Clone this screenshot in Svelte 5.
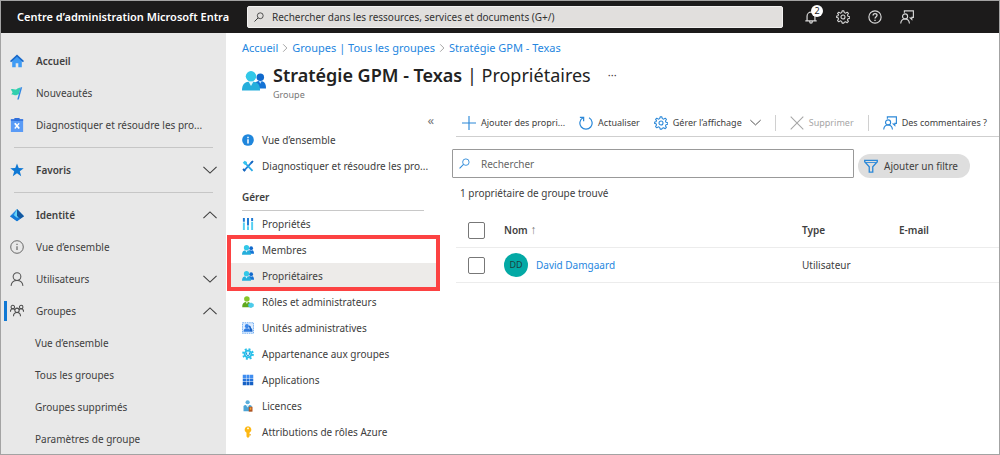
<script>
	const topLinks = [
		{ icon: 'home', label: 'Accueil', strong: true },
		{ icon: 'flag', label: 'Nouveautés' },
		{ icon: 'clipboard', label: 'Diagnostiquer et résoudre les pro...' }
	];

	const identityLinks = [
		{ icon: 'info', label: 'Vue d’ensemble' },
		{ icon: 'user', label: 'Utilisateurs', chevron: 'down' },
		{ icon: 'team', label: 'Groupes', chevron: 'up', current: true },
		{ label: 'Vue d’ensemble' },
		{ label: 'Tous les groupes' },
		{ label: 'Groupes supprimés' },
		{ label: 'Paramètres de groupe' }
	];

	const framedLinks = [
		{ icon: 'people', label: 'Membres' },
		{ icon: 'people', label: 'Propriétaires', active: true }
	];

	const manageLinks = [
		{ icon: 'roles', label: 'Rôles et administrateurs' },
		{ icon: 'units', label: 'Unités administratives' },
		{ icon: 'cog', label: 'Appartenance aux groupes' },
		{ icon: 'apps', label: 'Applications' },
		{ icon: 'licence', label: 'Licences' },
		{ icon: 'key', label: 'Attributions de rôles Azure' }
	];

	const owners = [{ initials: 'DD', name: 'David Damgaard', type: 'Utilisateur', mail: '' }];
</script>

{#snippet icon(name, size = 14)}
	<svg class="icon" width={size} height={size} viewBox="0 0 16 16" fill="none" aria-hidden="true">
		{#if name === 'home'}
			<path d="M2.5 7.5 8 2.5l5.5 5V15h-4v-4.500h-3V15h-4z" fill="#3f9bf4" />
			<path d="M8 .6 16 8l-1.200 1.300L8 3.200 1.200 9.300 0 8z" fill="#1667c9" />
		{:else if name === 'flag'}
			<path d="M1 4c2.500-1.600 4 .8 6.500-.4 1.500-.7 2.500-1.600 4.500-1.500l-2 7.200c-2 .3-2.500 1.500-4.500 1.200-1.600-.3-2.400-1.200-4-.7L3 7z" fill="#30cfae" />
			<path d="M12.200 1.500h1.700L10 15.500H8.300z" fill="#2f86e4" />
		{:else if name === 'clipboard'}
			<path d="M1 1.500h14V16H1z" fill="#5a9bf6" />
			<path d="M1 1.500h14V3H1zM5 0h6v3.500H5z" fill="#2f6fda" />
			<path d="m5.500 6 5 6" stroke="#fff" stroke-width="2.200" />
			<path d="m10.500 6-5 6" stroke="#fff" stroke-width="1.400" />
		{:else if name === 'star'}
			<path d="m8 .5 2 5.300 5.700.2-4.500 3.500 1.600 5.500L8 11.800 3.200 15l1.600-5.500L.3 6 6 5.800z" fill="#0f78d4" />
		{:else if name === 'entra'}
			<path d="m8 1 8 8.500-8 5.500-8-5.500z" fill="#2c8be0" />
			<path d="m8 1 4 8-4 2-4-2z" fill="#62d3fb" />
			<path d="m8 1 8 8.500-4.200 2.800L8 9z" fill="#14589f" />
			<path d="m0 9.500 4-1.800 4 3.800 4 .5-4 3z" fill="#1479d6" />
		{:else if name === 'info'}
			<circle cx="8" cy="8" r="7.200" stroke="#555" />
			<path d="M8 7v4.500M8 4.300v1.300" stroke="#555" stroke-width="1.200" />
		{:else if name === 'user'}
			<circle cx="8" cy="5.200" r="4.400" stroke="#555" stroke-width="1.200" />
			<path d="M1.200 15.800c.4-4 2.700-6 6.800-6s6.400 2 6.800 6" stroke="#555" stroke-width="1.200" />
		{:else if name === 'team'}
			<g stroke="#4a4a4a" stroke-width="1.200">
				<circle cx="3.200" cy="3.500" r="2" />
				<circle cx="12.800" cy="3.500" r="2" />
				<circle cx="8" cy="7.200" r="2.500" />
				<path d="M.5 8.800c0-2 1-3.300 2.700-3.300 1.300 0 2 .5 2.500 1.200M15.500 8.800c0-2-1-3.300-2.700-3.300-1.300 0-2 .5-2.500 1.200M4 14c0-2.800 1.600-4.300 4-4.300s4 1.500 4 4.300" />
			</g>
		{:else if name === 'down'}
			<path d="m.5 4.500 7.500 7 7.500-7" stroke="currentColor" stroke-width="1.300" />
		{:else if name === 'up'}
			<path d="m.5 11.500 7.500-7 7.500 7" stroke="currentColor" stroke-width="1.300" />
		{:else if name === 'right'}
			<path d="m5 2 6 6-6 6" stroke="#999" stroke-width="1.400" />
		{:else if name === 'infoFill'}
			<circle cx="8" cy="8" r="7.800" fill="#1f86dc" />
			<path d="M8 7v5.500M8 3.500v2" stroke="#fff" stroke-width="2" />
		{:else if name === 'tools'}
			<path d="m2.500 14.500 11-12" stroke="#1f7ed8" stroke-width="2.200" />
			<path d="m4 4 10 10.500" stroke="#27a9e6" stroke-width="2.400" />
			<path d="M1 3.500 3.500 1 6.500 2.500 6.800 6 4 6.800z" fill="#35c2ef" />
			<path d="m11 3 3-2.500 1.500 1.500L13 5zM.5 12.500l2-1.500 2.500 3L3 15.500z" fill="#1766bd" />
		{:else if name === 'sliders'}
			<path d="M2.500 0v5M8 0v10M13.500 0v4" stroke="#1c78d4" stroke-width="2.600" />
			<path d="M2.500 6v10M8 11v5M13.500 5v11" stroke="#55cff2" stroke-width="2.600" />
		{:else if name === 'people'}
			<circle cx="12.200" cy="5.500" r="2.500" fill="#1069cc" />
			<path d="M8 13V11c0-2 1.500-3 4.200-3 2.500 0 3.800 1.300 3.800 5z" fill="#1473d5" />
			<path d="m11.200 8 1 1.800 1-1.800z" fill="#b9dcfb" />
			<circle cx="6" cy="4.900" r="3.500" fill="#32c8e8" />
			<path d="M0 14.300C0 10.400 1.600 8.400 6 8.400s6 2 6 5.900z" fill="#25aedb" />
			<path d="m4.300 8.300 1.700 3 1.700-3z" fill="#d9f7fd" />
		{:else if name === 'roles'}
			<circle cx="6.500" cy="4" r="3.700" fill="#86c52a" />
			<path d="M.3 15C.3 10 2 8 6.500 8s6 2.500 6 7z" fill="#5fa81e" />
			<path d="m4.800 7.800 1.700 3 1.700-3z" fill="#e7f6d1" />
			<path d="m12 8.500 3.700 2v3.500L12 16l-3.600-2v-3.500z" fill="#4dcbea" />
		{:else if name === 'units'}
			<path d="M.6 1h14.800v14H.6z" fill="#dcecff" stroke="#4a97ee" stroke-dasharray="2 1" />
			<circle cx="6.500" cy="5.500" r="2.700" fill="#3a87ea" />
			<path d="M2 13c0-3.200 1.300-4.800 4.500-4.800S11 9.800 11 13z" fill="#2f7ce0" />
			<path d="M9 4.500c3 0 3 2 3 3.500 1.500.5 2 2 2 5h-3z" fill="#1b63c4" />
		{:else if name === 'cog'}
			<circle cx="8" cy="8" r="6.500" stroke="#29bfe9" stroke-width="2.600" stroke-dasharray="2.600 2.500" />
			<circle cx="8" cy="8" r="4.500" fill="#d5f6fd" stroke="#29bfe9" stroke-width="2.400" />
			<path d="M6 6v2.500c0 2 4 2 4 0V6" stroke="#1e91d8" stroke-width="1.300" />
		{:else if name === 'apps'}
			<path d="M1 1h4.300v4.300H1zM5.900 1h4.200v4.300H5.900zM10.700 1H15v4.300h-4.300z" fill="#3f8df0" />
			<path d="M1 5.900h4.300v4.200H1zM5.900 5.900h4.200v4.200H5.900zM10.700 5.900H15v4.200h-4.300z" fill="#2273dc" />
			<path d="M1 10.700h4.300V15H1zM5.900 10.700h4.200V15H5.900zM10.700 10.700H15V15h-4.300z" fill="#1560c4" />
		{:else if name === 'licence'}
			<circle cx="7.500" cy="3" r="2.800" fill="#5aaedc" />
			<path d="M2 15V8.500C2 7 4 6.500 7.500 6.500S13 7 13 8.500V15z" fill="#4ba4d6" />
			<path d="m5 6.500 2.500 3.500L10 6.500z" fill="#d8f0fb" />
			<path d="M9 9h5v6.500H9z" fill="#b3541e" />
			<path d="M10.500 10h2v3h-2z" fill="#f0a23a" />
		{:else if name === 'key'}
			<path d="M8 .3a4.600 4.600 0 0 1 2 8.700v5L8 16l-2-2v-5A4.600 4.600 0 0 1 8 .3z" fill="#fdb813" />
			<circle cx="8" cy="3.200" r="1.200" fill="#fff" />
			<path d="M10 10.500h1.500v2H10z" fill="#e79c08" />
		{:else if name === 'plus'}
			<path d="M8 0v16M0 8h16" stroke="#2b88d8" stroke-width="1.300" />
		{:else if name === 'refresh'}
			<path d="M4.500 2A7 7 0 1 0 11.500 2" stroke="#2b88d8" stroke-width="1.400" />
			<path d="M1 1.500h4.300V6" stroke="#2b88d8" stroke-width="1.400" />
		{:else if name === 'gear'}
			<path
				d="M7 1h2l.5 2 1.500.6 1.800-1.100 1.400 1.400-1.100 1.800.6 1.400 2 .5v1.800l-2 .5-.6 1.400 1.100 1.800-1.400 1.400-1.800-1.100-1.500.6L9 15H7l-.5-2-1.500-.6-1.800 1.100-1.400-1.400 1.100-1.800-.6-1.400-2-.5V7.100l2-.5.6-1.400L1.800 3.900l1.400-1.400L5 3.600 6.500 3z"
				stroke="currentColor"
				stroke-width="1.200"
				stroke-linejoin="round"
			/>
			<circle cx="8" cy="8" r="2.300" stroke="currentColor" stroke-width="1.200" />
		{:else if name === 'cross'}
			<path d="m.8.800 14.400 14.400M15.200.8.800 15.200" stroke="#a6a6a6" stroke-width="1.200" />
		{:else if name === 'feedback'}
			<g stroke="currentColor" stroke-width="1.300">
				<path d="M5 3.200V1h10.300v7.500h-1.800v2.300L11 8.500" />
				<circle cx="5.800" cy="7.300" r="2.900" />
				<path d="M.8 15.500c.3-3.300 2-5.200 5-5.200s4.700 1.900 5 5.200" />
			</g>
		{:else if name === 'funnel'}
			<path d="M.8 1.500h14.400v1.700L10 9v6H6V9L.8 3.200z" stroke="#2b88d8" stroke-width="1.500" />
			<path d="M1 4h14" stroke="#2b88d8" />
		{:else if name === 'search'}
			<circle cx="10" cy="6" r="4.700" stroke="currentColor" stroke-width="1.300" />
			<path d="M6.600 9.400.8 15.200" stroke="currentColor" stroke-width="1.500" />
		{:else if name === 'bell'}
			<path d="M1.500 12.500h13M3.500 12.500V7a4.500 4.500 0 0 1 9 0v5.500M6.500 13c0 2.500 3 2.500 3 0" stroke="currentColor" stroke-width="1.400" />
		{:else if name === 'help'}
			<circle cx="8" cy="8" r="7" stroke="currentColor" stroke-width="1.300" />
			<path d="M5.800 6.300c0-3 4.500-2.800 4.500-.2C10.300 7.700 8 7.800 8 9.800M8 11v1.500" stroke="currentColor" stroke-width="1.500" />
		{/if}
	</svg>
{/snippet}

{#snippet menuItem(item)}
	<li>
		<a class="menu-item" class:active={item.active} href="#menu">
			{@render icon(item.icon, 12)}
			{item.label}
		</a>
	</li>
{/snippet}

<div class="portal">
	<header>
		<strong class="brand">Centre d’administration Microsoft Entra</strong>
		<label class="global-search">
			{@render icon('search', 10)}
			<input
				type="text"
				aria-label="Recherche globale"
				placeholder="Rechercher dans les ressources, services et documents (G+/)"
			/>
		</label>
		<div class="actions">
			<button aria-label="Notifications">{@render icon('bell')}<span class="badge">2</span></button>
			<button aria-label="Paramètres">{@render icon('gear')}</button>
			<button aria-label="Aide">{@render icon('help')}</button>
			<button aria-label="Commentaires">{@render icon('feedback')}</button>
		</div>
	</header>

	<div class="body">
		<nav class="sidebar" aria-label="Navigation">
			{#each topLinks as link}
				<a class="side-item" class:strong={link.strong} href="#nav">
					{@render icon(link.icon)}<span>{link.label}</span>
				</a>
			{/each}
			<hr />
			<button class="side-item strong">
				{@render icon('star')}<span>Favoris</span>{@render icon('down')}
			</button>
			<hr />
			<button class="side-item strong">
				{@render icon('entra')}<span>Identité</span>{@render icon('up')}
			</button>
			{#each identityLinks as link}
				<a class="side-item" class:current={link.current} href="#nav">
					{#if link.icon}{@render icon(link.icon)}{/if}
					<span>{link.label}</span>
					{#if link.chevron}{@render icon(link.chevron)}{/if}
				</a>
			{/each}
		</nav>

		<main>
			<nav class="breadcrumb" aria-label="Fil d’Ariane">
				<a href="#home">Accueil</a>
				{@render icon('right', 10)}
				<a href="#groups">Groupes | Tous les groupes</a>
				{@render icon('right', 10)}
				<a href="#group">Stratégie GPM - Texas</a>
			</nav>

			<div class="heading">
				{@render icon('people', 24)}
				<div>
					<h1>Stratégie GPM - Texas <span>| Propriétaires</span></h1>
					<p>Groupe</p>
				</div>
				<button class="more" aria-label="Plus">···</button>
			</div>

			<div class="blade">
				<nav class="menu" aria-label="Menu du groupe">
					<button class="collapse" aria-label="Réduire">«</button>
					<ul>
						{@render menuItem({ icon: 'infoFill', label: 'Vue d’ensemble' })}
						{@render menuItem({ icon: 'tools', label: 'Diagnostiquer et résoudre les pro...' })}
					</ul>
					<h2>Gérer</h2>
					<ul>
						{@render menuItem({ icon: 'sliders', label: 'Propriétés' })}
					</ul>
					<ul class="framed">
						{#each framedLinks as item}
							{@render menuItem(item)}
						{/each}
					</ul>
					<ul>
						{#each manageLinks as item}
							{@render menuItem(item)}
						{/each}
					</ul>
				</nav>

				<section class="content">
					<div class="toolbar">
						<button>{@render icon('plus')}Ajouter des propri...</button>
						<button>{@render icon('refresh')}Actualiser</button>
						<button class="blue">{@render icon('gear')}<span>Gérer l’affichage</span></button>
						<button class="caret" aria-label="Options d’affichage">{@render icon('down', 11)}</button>
						<i></i>
						<button disabled>{@render icon('cross')}Supprimer</button>
						<i></i>
						<button class="blue">{@render icon('feedback')}<span>Des commentaires ?</span></button>
					</div>

					<div class="filters">
						<label class="search">
							{@render icon('search', 11)}
							<input type="text" aria-label="Rechercher" placeholder="Rechercher" />
						</label>
						<button class="pill">{@render icon('funnel')}Ajouter un filtre</button>
					</div>

					<p class="count">1 propriétaire de groupe trouvé</p>

					<table>
						<thead>
							<tr>
								<th class="check"><input type="checkbox" aria-label="Tout sélectionner" /></th>
								<th>Nom <span class="sort">↑</span></th>
								<th class="type">Type</th>
								<th class="mail">E-mail</th>
							</tr>
						</thead>
						<tbody>
							{#each owners as owner}
								<tr>
									<td class="check"><input type="checkbox" aria-label={owner.name} /></td>
									<td>
										<a class="owner" href="#owner">
											<span class="avatar">{owner.initials}</span>{owner.name}
										</a>
									</td>
									<td>{owner.type}</td>
									<td>{owner.mail}</td>
								</tr>
							{/each}
						</tbody>
					</table>
				</section>
			</div>
		</main>
	</div>
</div>

<style>
	:global(body) {
		margin: 0;
	}

	.portal {
		--blue: #2586e0;
		--text: #404040;
		display: flex;
		flex-direction: column;
		box-sizing: border-box;
		min-height: 100vh;
		border: 1px solid #a3a3a3;
		background: #fff;
		color: var(--text);
		font-family: 'Noto Sans', 'Open Sans', sans-serif;
		font-size: 10px;
		line-height: 16px;
	}

	button,
	input {
		margin: 0;
		padding: 0;
		border: 0;
		background: none;
		color: inherit;
		font: inherit;
	}

	a {
		color: inherit;
		text-decoration: none;
	}

	ul {
		margin: 0;
		padding: 0;
		list-style: none;
	}

	.icon {
		flex: none;
	}

	header {
		display: flex;
		align-items: center;
		height: 32px;
		padding-left: 16px;
		background: #1c1b1b;
		color: #fff;
	}

	.brand {
		flex: none;
		width: 230px;
		font-size: 11px;
		font-weight: 600;
		white-space: nowrap;
	}

	.global-search {
		display: flex;
		flex: 0 1 536px;
		align-items: center;
		gap: 8px;
		box-sizing: border-box;
		height: 22px;
		padding: 0 6px;
		border: 1px solid #f2f1f0;
		border-radius: 2px;
		background: #e1dfdd;
		color: #333;
	}

	.global-search input,
	.search input {
		flex: 1;
		min-width: 0;
		outline: none;
	}

	input::placeholder {
		color: inherit;
		opacity: 1;
	}

	.actions {
		display: flex;
		gap: 18px;
		margin-left: 21px;
		color: #d8d8d8;
	}

	.actions button {
		display: flex;
		position: relative;
	}

	.badge {
		position: absolute;
		top: -5px;
		right: -5px;
		width: 12px;
		height: 12px;
		border-radius: 50%;
		background: #fff;
		color: #222;
		font-size: 9px;
		line-height: 12px;
	}

	.body {
		display: grid;
		flex: 1;
		grid-template-columns: 225px 1fr;
	}

	.sidebar {
		display: flex;
		flex-direction: column;
		gap: 12px;
		padding-top: 18px;
		background: #e8e8e8;
	}

	.sidebar hr {
		flex: none;
		height: 1px;
		margin: 0 13px;
		border: 0;
		background: #c6c6c6;
	}

	.side-item {
		display: flex;
		align-items: center;
		gap: 12px;
		height: 20px;
		padding: 0 9px;
		text-align: left;
	}

	.side-item span {
		flex: 1;
		white-space: nowrap;
	}

	.side-item span:first-child {
		margin-left: 25px;
	}

	.strong {
		font-weight: 600;
	}

	.current {
		background: linear-gradient(#0f78d4, #0f78d4) 3px center / 3px 20px no-repeat;
	}

	main {
		min-width: 0;
		padding-left: 16px;
	}

	.breadcrumb {
		display: flex;
		align-items: center;
		gap: 2px;
		height: 30px;
		color: var(--blue);
		font-size: 11px;
	}

	.heading {
		display: flex;
		align-items: flex-start;
		gap: 7px;
		height: 46px;
	}

	.heading .icon {
		margin-top: 6px;
	}

	h1 {
		margin: 0;
		color: #222;
		font-size: 18px;
		font-weight: 600;
		line-height: 24px;
		white-space: nowrap;
	}

	h1 span {
		font-weight: 400;
	}

	.heading p {
		margin: 0;
		color: #777;
		font-size: 9px;
		line-height: 16px;
	}

	.more {
		margin: 4px 0 0 10px;
		font-size: 11px;
	}

	.blade {
		display: grid;
		grid-template-columns: 198px 1fr;
	}

	.menu {
		display: flex;
		flex-direction: column;
	}

	.collapse {
		align-self: flex-end;
		height: 18px;
		margin-right: 6px;
		color: #777;
		font-size: 13px;
		line-height: 22px;
	}

	.menu-item {
		display: flex;
		align-items: center;
		gap: 8px;
		height: 26px;
		white-space: nowrap;
	}

	h2 {
		margin: 10px 16px 0 0;
		padding-bottom: 5px;
		border-bottom: 1px solid #c8c8c8;
		font-size: 10px;
		font-weight: 600;
		line-height: 16px;
	}

	.framed {
		position: relative;
		margin: 0 0 0 -12px;
	}

	.framed .menu-item {
		padding-left: 12px;
	}

	.framed::after {
		content: '';
		position: absolute;
		inset: -2px 0 -2px -3px;
		border: 4px solid #fc4242;
	}

	.active {
		background: #edebe9;
	}

	.content {
		min-width: 0;
		padding-left: 12px;
	}

	.toolbar {
		display: flex;
		align-items: center;
		justify-content: space-between;
		height: 27px;
		margin-left: 4px;
		padding: 0 12px 0 6px;
		border-bottom: 1px solid #cfcfcf;
		font-size: 9px;
	}

	.toolbar button {
		display: flex;
		align-items: center;
		gap: 5px;
		white-space: nowrap;
	}

	.toolbar .caret {
		margin-left: -6px;
	}

	.toolbar button:disabled {
		color: #a6a6a6;
	}

	.toolbar i {
		width: 1px;
		height: 16px;
		background: #d0d0d0;
	}

	.blue {
		color: #2b88d8;
	}

	.blue span {
		color: var(--text);
	}

	.filters {
		display: flex;
		align-items: flex-end;
		gap: 4px;
		margin: 12px 29px 0 0;
	}

	.search {
		display: flex;
		flex: 1;
		align-items: center;
		gap: 11px;
		box-sizing: border-box;
		height: 29px;
		padding: 0 6px;
		border: 1px solid #999;
		border-radius: 1px;
		color: #666;
	}

	.search .icon {
		color: #2b88d8;
	}

	.pill {
		display: flex;
		align-items: center;
		gap: 6px;
		height: 24px;
		padding: 0 12px 0 6px;
		border-radius: 12px;
		background: #dedede;
	}

	.count {
		margin: 7px 0 12px 8px;
	}

	table {
		width: calc(100% - 4px);
		margin-left: 4px;
		border-collapse: collapse;
		table-layout: fixed;
	}

	th,
	td {
		height: 34px;
		padding: 0;
		border-bottom: 1px solid #ececec;
		text-align: left;
	}

	th {
		font-weight: 600;
	}

	.check {
		width: 48px;
	}

	.check input {
		display: block;
		box-sizing: border-box;
		width: 17px;
		height: 17px;
		margin-left: 12px;
		border: 1px solid #777;
		border-radius: 2px;
		appearance: none;
	}

	.check input:checked {
		background: var(--blue);
	}

	.sort {
		color: #777;
		font-size: 12px;
		font-weight: 400;
	}

	.type {
		width: 97px;
	}

	.mail {
		width: 100px;
	}

	.owner {
		display: flex;
		align-items: center;
		gap: 8px;
		color: var(--blue);
	}

	.avatar {
		width: 24px;
		height: 24px;
		border-radius: 50%;
		background: #03a9a5;
		color: #1c3f3e;
		font-size: 9px;
		line-height: 24px;
		text-align: center;
	}
</style>
